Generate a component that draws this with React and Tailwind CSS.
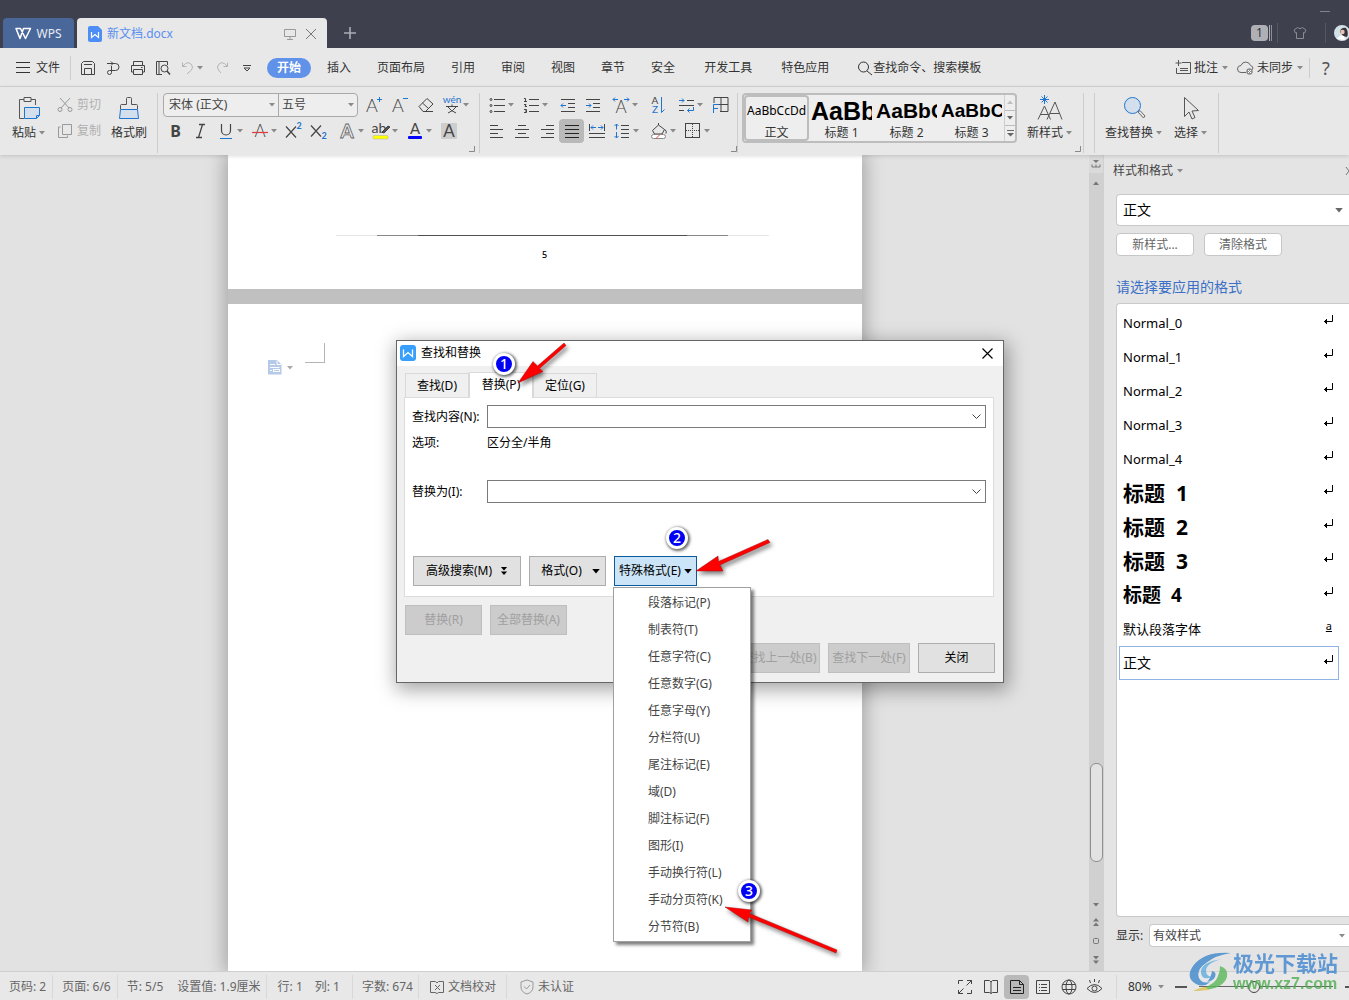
import { useState } from "react";

/* ---------------- DATA ---------------- */

const MENU_TABS = ["插入", "页面布局", "引用", "审阅", "视图", "章节", "安全"];
const EXTRA_TABS = ["开发工具", "特色应用"];

const SPECIAL_FORMATS = [
  "段落标记(P)",
  "制表符(T)",
  "任意字符(C)",
  "任意数字(G)",
  "任意字母(Y)",
  "分栏符(U)",
  "尾注标记(E)",
  "域(D)",
  "脚注标记(F)",
  "图形(I)",
  "手动换行符(L)",
  "手动分页符(K)",
  "分节符(B)",
];

const GALLERY = [
  { label: "正文", sample: "AaBbCcDd", preview: "text-xs" },
  { label: "标题 1", sample: "AaBb", preview: "font-['Liberation_Sans'] text-[25px] font-bold" },
  { label: "标题 2", sample: "AaBbC", preview: "font-['Liberation_Sans'] text-[21px] font-bold" },
  { label: "标题 3", sample: "AaBbCc", preview: "font-['Liberation_Sans'] text-[19px] font-bold" },
];

const STYLES = [
  { name: "Normal_0", cls: "text-[13px]" },
  { name: "Normal_1", cls: "text-[13px]" },
  { name: "Normal_2", cls: "text-[13px]" },
  { name: "Normal_3", cls: "text-[13px]" },
  { name: "Normal_4", cls: "text-[13px]" },
  { name: "标题  1", cls: "text-[21px] font-bold" },
  { name: "标题  2", cls: "text-[21px] font-bold" },
  { name: "标题  3", cls: "text-[21px] font-bold" },
  { name: "标题  4", cls: "text-[19px] font-bold" },
  { name: "默认段落字体", cls: "text-[13px]", mark: "a" },
  { name: "正文", cls: "text-sm" },
];

/* ---------------- SMALL PARTS ---------------- */

function Icon({ children, size = 18, box = 18, className = "" }) {
  return (
    <svg
      width={size}
      height={size}
      viewBox={`0 0 ${box} ${box}`}
      fill="none"
      stroke="currentColor"
      strokeWidth="1"
      className={`shrink-0 overflow-visible ${className}`}
      aria-hidden="true"
    >
      {children}
    </svg>
  );
}

function Caret({ className = "text-[#8a8a8a]", wide }) {
  return (
    <svg
      width={wide ? 8 : 6}
      height={wide ? 5 : 4}
      viewBox="0 0 6 4"
      className={`shrink-0 ${className}`}
      aria-hidden="true"
    >
      <path d="M0 0h6L3 3.6z" fill="currentColor" />
    </svg>
  );
}

function Tool({ label, children, caret, active }) {
  return (
    <button
      aria-label={label}
      className={`flex h-6 shrink-0 items-center justify-center gap-[2px] rounded ${
        caret ? "w-[34px]" : "w-[25px]"
      } ${active ? "bg-[#b9b9b9]" : ""}`}
    >
      {children}
      {caret && <Caret />}
    </button>
  );
}

function Letter({ children, size = 17, x = 9, y = 15, ...rest }) {
  return (
    <text
      x={x}
      y={y}
      fontSize={size}
      textAnchor="middle"
      fill="currentColor"
      stroke="none"
      fontFamily="Lato, sans-serif"
      {...rest}
    >
      {children}
    </text>
  );
}

function Divider({ className = "h-[62px]" }) {
  return <div className={`w-px shrink-0 bg-[#cdcdcd] ${className}`} />;
}

function Launcher() {
  return (
    <Icon size={6} box={6} className="mb-px self-end text-[#888]">
      <path d="M5.5 0v5.5H0" />
    </Icon>
  );
}

function DocLogo({ className }) {
  return (
    <Icon size={16} box={16} className={className}>
      <rect width="16" height="16" rx="3" fill="currentColor" stroke="none" />
      <path d="M3.5 4.5v7l4.5-4 4.5 4v-7" stroke="#fff" strokeWidth="1.3" />
    </Icon>
  );
}

function ReturnMark() {
  return (
    <Icon size={10} box={10} className="text-black">
      <path d="M9.5 0v6.5H1M3.5 4v5M2.5 5v3" />
    </Icon>
  );
}

/* ---------------- TITLE BAR ---------------- */

function TitleBar() {
  return (
    <header className="relative flex h-12 shrink-0 items-end bg-[#3e414d] pl-[3px] text-xs">
      <button className="flex h-[30px] w-[71px] items-center justify-center gap-1 rounded-t bg-[#4a6799] pt-px text-[#e8ecf4]">
        <Icon className="text-white" size={17} box={17}>
          <path d="M1 3.500h4.500L10.500 13.500 15.500 3.500H8.500L5 13.500z" strokeWidth="1.500" strokeLinejoin="round" />
        </Icon>
        WPS
      </button>
      <div className="ml-[3px] flex h-[30px] w-[250px] items-center rounded-t bg-[#e8e8e8] px-[10px] pt-px text-[#5a8ff0]">
        <Icon size={16} box={16} className="mr-1 text-[#4d8df6]">
          <path d="M3 0h8l4 4v10a2 2 0 0 1-2 2H3a2 2 0 0 1-2-2V2a2 2 0 0 1 2-2z" fill="currentColor" stroke="none" />
          <path d="M4.500 6v5.500L8 8.500l3.500 3V6" stroke="#fff" strokeWidth="1.200" />
        </Icon>
        <span className="flex-1">新文档.docx</span>
        <Icon size={12} box={12} className="mr-[9px] text-[#999]">
          <path d="M.5 1.500h11v7H.5zM6 8.500v3M3 11.500h6" />
        </Icon>
        <button aria-label="关闭文档">
          <Icon size={12} box={12} className="text-[#777]">
            <path d="M1 1l10 10M11 1L1 11" />
          </Icon>
        </button>
      </div>
      <button aria-label="新建" className="ml-4 flex h-[30px] items-center">
        <Icon size={14} box={14} className="text-[#aaadb5]">
          <path d="M7 1v12M1 7h12" strokeWidth="1.600" />
        </Icon>
      </button>

      <div className="ml-auto flex h-[30px] items-center text-[#6f727c]">
        <span className="flex h-4 w-[17px] items-center justify-center rounded-sm bg-[#aeb0b6] text-[#33363f]">1</span>
        <span className="ml-px h-4 w-px bg-[#aeb0b6]" />
        <span className="ml-px h-4 w-px bg-[#8d9098]" />
        <span className="ml-[5px] h-5 w-px bg-[#555863]" />
        <Icon size={14} box={14} className="ml-[15px] text-[#8a8c94]">
          <path d="M4.500 1.500Q7 4 9.500 1.500L13 4l-1.500 3-1-.5v6h-7v-6l-1 .5L1 4z" />
        </Icon>
        <span className="ml-[18px] h-5 w-px bg-[#555863]" />
        <Icon size={16} box={16} className="-mr-px ml-2">
          <circle cx="8" cy="8" r="8" fill="#d3e0e6" stroke="none" />
          <path d="M6 7q1-5 6-4 3 4 1 9l-4-1z" fill="#3b3338" stroke="none" />
          <circle cx="8.500" cy="7" r="2.200" fill="#e7c4b5" stroke="none" />
          <path d="M3 14q3-5 7-3l1 4z" fill="#fff" stroke="none" />
        </Icon>
      </div>
      <button aria-label="最小化" className="absolute right-[19px] top-[11px] h-px w-[10px] bg-[#82848c]" />
    </header>
  );
}

/* ---------------- MENU BAR ---------------- */

function MenuBar() {
  return (
    <nav className="flex h-[39px] shrink-0 items-center border-b border-[#d4d4d4] bg-[#e8e8e8] pl-[15px] pt-px text-xs text-[#333]">
      <button className="flex items-center gap-[5px]">
        <Icon size={16} box={16}>
          <path d="M1 2.500h14M1 7.500h14M1 12.500h14" />
        </Icon>
        文件
      </button>
      <Divider className="ml-[10px] h-6" />
      <div className="ml-1 flex items-center text-[#444]">
        <Tool label="保存">
          <Icon size={16} box={16}>
            <path d="M1.500 3.500l2-2h9l2 2v11h-13zM4.500 14V8.500h7V14M4 4.500h8" />
          </Icon>
        </Tool>
        <Tool label="输出为PDF">
          <Icon size={16} box={16}>
            <path d="M2 3.500h6M6 1.500l2 2-2 2M6 3.500h4.500a3.500 3.500 0 0 1 0 7H6M6.500 6v6.500M6.500 12.500a2 2 0 1 1-2-2h3" />
          </Icon>
        </Tool>
        <Tool label="打印">
          <Icon size={16} box={16}>
            <path d="M3.500 5V1.500h9V5M3.500 12h-2V5.500h13V12h-2M3.500 9.500h9v5h-9zM11 7.500h1.500" />
          </Icon>
        </Tool>
        <Tool label="打印预览">
          <Icon size={16} box={16}>
            <path d="M7 14.500H1.500v-13h11V5M4 1.500v13" />
            <circle cx="9.500" cy="8.500" r="3.500" />
            <path d="M12 11l3 3.500" strokeWidth="1.500" />
          </Icon>
        </Tool>
        <div className="flex text-[#b4b4b4]">
          <Tool label="撤销" caret>
            <Icon size={14} box={14}>
              <path d="M1.500 1.500v4h4M1.500 5.500l3-3a4.500 4.500 0 0 1 6 6.500L6 13" />
            </Icon>
          </Tool>
          <Tool label="重做">
            <Icon size={14} box={14}>
              <path d="M12.500 1.500v4h-4M12.500 5.500l-3-3a4.500 4.500 0 0 0-6 6.500L6 12" />
            </Icon>
          </Tool>
        </div>
        <Tool label="自定义快速访问工具栏">
          <Icon size={10} box={10}>
            <path d="M1 2.500h8M2 5l3 3 3-3z" />
          </Icon>
        </Tool>
      </div>
      <button className="ml-2 h-5 w-11 shrink-0 rounded-full bg-[#5f92e8] font-bold text-white">开始</button>
      <div className="ml-4 flex gap-[26px] whitespace-nowrap">
        {MENU_TABS.map((t) => (
          <button key={t}>{t}</button>
        ))}
      </div>
      <div className="ml-[29px] flex gap-[29px] whitespace-nowrap">
        {EXTRA_TABS.map((t) => (
          <button key={t}>{t}</button>
        ))}
      </div>
      <button className="ml-7 flex items-center whitespace-nowrap">
        <Icon size={16} box={16}>
          <circle cx="6.500" cy="7" r="5" />
          <path d="M10 11l5 4" />
        </Icon>
        查找命令、搜索模板
      </button>

      <div className="ml-auto flex items-center whitespace-nowrap">
        <button className="flex items-center gap-[3px]">
          <Icon size={16} box={16} className="text-[#555]">
            <path d="M7 2.500h8.500v11H1.500V8M3.500 0v6M.5 3h6M5 8.500h8M5 10.500h8" />
          </Icon>
          批注
          <Caret className="ml-px text-[#8a8a8a]" />
        </button>
        <button className="ml-[9px] flex items-center gap-[3px]">
          <Icon size={17} box={17} className="text-[#666]">
            <path d="M9 13.500H4a3.500 3.500 0 0 1 0-7 5 5 0 0 1 9.500 0 3 3 0 0 1 2 4" />
            <circle cx="12.500" cy="12.500" r="3.200" fill="#8b8b8b" stroke="none" />
            <path d="M11 11l3 3M14 11l-3 3" stroke="#fff" />
          </Icon>
          未同步
          <Caret className="ml-px text-[#8a8a8a]" />
        </button>
        <Divider className="ml-[6px] h-5" />
        <button aria-label="帮助" className="ml-[11px] mr-[18px] w-[10px] text-center text-lg leading-5 text-[#555]">
          ?
        </button>
      </div>
    </nav>
  );
}

/* ---------------- RIBBON ---------------- */

function BigTool({ label, caret, children }) {
  return (
    <button className="flex shrink-0 flex-col items-center gap-[2px] whitespace-nowrap text-xs text-[#333]">
      <span className="flex h-[30px] items-center">{children}</span>
      <span className="flex h-4 items-center gap-[3px] leading-4">
        {label}
        {caret && <Caret />}
      </span>
    </button>
  );
}

function FontGroup() {
  return (
    <div className="ml-[5px] flex shrink-0 flex-col gap-[2px] text-[#444]">
      <div className="flex items-center gap-px">
        <div className="mr-[2px] flex h-6 rounded border border-[#a9a9a9] bg-[#eee] text-xs">
          <label className="flex w-[115px] items-center border-r border-[#a9a9a9] pr-[3px]">
            <select aria-label="字体" className="h-full flex-1 appearance-none pl-[5px] outline-none">
              <option>宋体 (正文)</option>
            </select>
            <Caret />
          </label>
          <label className="flex w-[78px] items-center pr-[3px]">
            <select aria-label="字号" className="h-full w-10 flex-1 appearance-none pl-[3px] outline-none">
              <option>五号</option>
            </select>
            <Caret />
          </label>
        </div>
        <Tool label="增大字号">
          <Icon>
            <Letter x={7} y={16} size={18} fontWeight="300">A</Letter>
            <path d="M14.500 1v5M12 3.500h5" stroke="#1f74d0" />
          </Icon>
        </Tool>
        <Tool label="减小字号">
          <Icon>
            <Letter x={7} y={16} size={18} fontWeight="300">A</Letter>
            <path d="M12 2.500h5" stroke="#1f74d0" />
          </Icon>
        </Tool>
        <Tool label="清除格式">
          <Icon>
            <path d="M2 10.500L10 2.500l6 5.500-7.500 7.500H6zM5.500 7l6 5.500M6 15.500h10" />
          </Icon>
        </Tool>
        <Tool label="拼音指南" caret>
          <Icon>
            <Letter y={7} size={10} fill="#1f74d0">wén</Letter>
            <path d="M3 10.500h12M9 8.500v2M5 11q3 4 8 6M13 11q-3 4-8 6" />
          </Icon>
        </Tool>
      </div>
      <div className="flex items-center">
        <Tool label="加粗">
          <span className="text-base font-bold">B</span>
        </Tool>
        <Tool label="倾斜">
          <Icon>
            <path d="M7 2.500h6M4 15.500h6M10.500 2.500l-4 13" strokeWidth="1.300" />
          </Icon>
        </Tool>
        <Tool label="下划线" caret>
          <Icon>
            <path d="M4.500 2v6.500a4 4 0 0 0 9 0V2" strokeWidth="1.200" />
            <path d="M3 16.500h12" stroke="#1f74d0" />
          </Icon>
        </Tool>
        <Tool label="删除线" caret>
          <Icon>
            <Letter fontWeight="300">A</Letter>
            <path d="M1 10.500h16" stroke="#e03a3a" strokeWidth="1.200" />
          </Icon>
        </Tool>
        <Tool label="上标">
          <Icon>
            <path d="M1 4.500l10 11M11 4.500l-10 11" strokeWidth="1.200" />
            <Letter x={14} y={7} size={9} fontWeight="700" fill="#1f74d0">2</Letter>
          </Icon>
        </Tool>
        <Tool label="下标">
          <Icon>
            <path d="M1 3.500l10 11M11 3.500l-10 11" strokeWidth="1.200" />
            <Letter x={14} y={17} size={9} fontWeight="700" fill="#1f74d0">2</Letter>
          </Icon>
        </Tool>
        <div className="ml-[3px] flex">
          <Tool label="文字效果" caret>
            <Icon>
              <Letter y={16} size={19} fontWeight="700" fill="#e8e8e8" stroke="#666" strokeWidth=".8">A</Letter>
            </Icon>
          </Tool>
          <Tool label="突出显示" caret>
            <Icon>
              <Letter x={7} y={11} size={14}>ab</Letter>
              <path d="M10 10l6-6 2 1-6 6z" fill="#555" />
              <rect x="1" y="13.500" width="15" height="3.500" rx="1" fill="#ffff00" stroke="#aaa" strokeWidth=".5" />
            </Icon>
          </Tool>
          <Tool label="字体颜色" caret>
            <Icon>
              <Letter y={12} size={15}>A</Letter>
              <rect x="2" y="14" width="14" height="3" rx="1" fill="#0000ff" stroke="none" />
            </Icon>
          </Tool>
          <Tool label="字符底纹">
            <Icon>
              <rect x="1" y="1" width="16" height="16" rx="1" fill="#cdcdcd" stroke="none" />
              <Letter>A</Letter>
            </Icon>
          </Tool>
        </div>
      </div>
    </div>
  );
}

function ParagraphGroup() {
  const blue = "#1f74d0";
  return (
    <div className="ml-1 flex shrink-0 flex-col gap-[2px] text-[#444]">
      <div className="flex items-center">
        <Tool label="项目符号" caret>
          <Icon>
            <path d="M6 3.500h11M6 9.500h11M6 15.500h11" />
            <circle cx="3" cy="3.500" r="1" />
            <circle cx="3" cy="9.500" r="1" />
            <circle cx="3" cy="15.500" r="1" />
          </Icon>
        </Tool>
        <Tool label="编号" caret>
          <Icon>
            <path d="M7 3.500h10M7 9.500h10M7 15.500h10M2 2.500h1.500v3M2 5.500h3M2 8.500h2l-1 2h2M2 13.500h2.500v3H2M3 15h1" />
          </Icon>
        </Tool>
        <div className="ml-[3px] flex">
          <Tool label="减少缩进量">
            <Icon>
              <path d="M2 3.500h14M9 7.500h7M9 11.500h7M2 15.500h14" />
              <path d="M2 9.500h5M4 7.500l-2 2 2 2" stroke={blue} />
            </Icon>
          </Tool>
          <Tool label="增加缩进量">
            <Icon>
              <path d="M2 3.500h14M9 7.500h7M9 11.500h7M2 15.500h14" />
              <path d="M2 9.500h5M5 7.500l2 2-2 2" stroke={blue} />
            </Icon>
          </Tool>
        </div>
        <div className="ml-[3px] flex">
          <Tool label="字符缩放" caret>
            <Icon>
              <Letter y={17} fontWeight="300" size={17}>A</Letter>
              <path d="M1 3.500h5M3 1.500l-2 2 2 2M12 3.500h5M15 1.500l2 2-2 2" stroke={blue} />
            </Icon>
          </Tool>
        </div>
        <div className="ml-[3px] flex">
          <Tool label="排序">
            <Icon>
              <Letter x={6} y={8} size={10}>A</Letter>
              <Letter x={6} y={17} size={10} fill={blue}>Z</Letter>
              <path d="M12.500 1v15.500M12.500 16.500l3-3" stroke={blue} />
            </Icon>
          </Tool>
        </div>
        <div className="ml-[3px] flex">
          <Tool label="显示编辑标记" caret>
            <Icon>
              <path d="M10 4.500h7M2 9.500h15M2 14.500h5" />
              <path d="M2 4.500h5M5 2.500l2 2-2 2M16.500 11v3.500h-6M12.500 12.500l-2 2 2 2" stroke={blue} />
            </Icon>
          </Tool>
          <Tool label="制表位">
            <Icon>
              <path d="M3 7V1.500h14v14H9M10 1.500v14M8 8.500h9" />
              <path d="M2.500 17V8.500H8M2.500 12.500H7" stroke={blue} />
            </Icon>
          </Tool>
        </div>
      </div>
      <div className="flex items-center">
        <Tool label="左对齐">
          <Icon>
            <path d="M2 3.500h8M2 7.500h13M2 11.500h8M2 15.500h13" />
          </Icon>
        </Tool>
        <Tool label="居中对齐">
          <Icon>
            <path d="M5 3.500h8M2 7.500h14M5 11.500h8M2 15.500h14" />
          </Icon>
        </Tool>
        <Tool label="右对齐">
          <Icon>
            <path d="M8 3.500h8M3 7.500h13M8 11.500h8M3 15.500h13" />
          </Icon>
        </Tool>
        <Tool label="两端对齐" active>
          <Icon>
            <path d="M2 3.500h14M2 7.500h14M2 11.500h14M2 15.500h14" stroke="#222" />
          </Icon>
        </Tool>
        <Tool label="分散对齐">
          <Icon>
            <path d="M1.500 2v7M16.500 2v7M1 11.500h16M1 15.500h16" />
            <path d="M3 5.500h5M5 3.500l-2 2 2 2M10 5.500h5M13 3.500l2 2-2 2" stroke={blue} />
          </Icon>
        </Tool>
        <Tool label="行距" caret>
          <Icon>
            <path d="M8 3.500h8M8 7.500h8M8 11.500h8M8 15.500h8" />
            <path d="M3.500 2v5.500M1.500 4l2-2 2 2M3.500 10v6M1.500 14l2 2 2-2" stroke={blue} />
          </Icon>
        </Tool>
        <div className="ml-[3px] flex">
          <Tool label="底纹颜色" caret>
            <Icon>
              <path d="M2.500 8.500l6-5.500 6 4.500-2.500 4.500H4.500zM8.500 3V1M15 7.500q2 2 1 4" />
              <rect x="1.500" y="12.500" width="14" height="4" rx="2" fill="#fff" stroke="#888" />
              <path d="M6 16.500l4-4" stroke="#e04b4b" />
            </Icon>
          </Tool>
          <Tool label="边框" caret>
            <Icon>
              <rect x="1.500" y="1.500" width="14" height="14" />
              <path d="M8.500 2v14M2 8.500h14" strokeDasharray="1 1" />
            </Icon>
          </Tool>
        </div>
      </div>
    </div>
  );
}

function StyleGallery() {
  return (
    <div className="ml-1 flex h-[50px] shrink-0 rounded border-2 border-[#bdbdbd] bg-[#eee] text-xs text-[#333]">
      {GALLERY.map((s, i) => (
        <button
          key={s.label}
          className={`flex w-[65px] flex-col items-center justify-end overflow-hidden px-[2px] ${
            i === 0 ? "rounded-sm shadow-[inset_0_0_0_2px_#bdbdbd]" : ""
          }`}
        >
          <span className={`flex h-7 w-full items-center overflow-hidden leading-7 text-black ${i === 0 ? "justify-center" : ""} ${s.preview}`}>
            {s.sample}
          </span>
          <span className="leading-4">{s.label}</span>
        </button>
      ))}
      <div className="flex w-[11px] flex-col divide-y divide-[#bdbdbd] border-l border-[#cfcfcf]">
        <button aria-label="上一行" className="flex flex-1 items-center justify-center">
          <Caret className="rotate-180 text-[#c0c0c0]" />
        </button>
        <button aria-label="下一行" className="flex flex-1 items-center justify-center">
          <Caret className="text-[#666]" />
        </button>
        <button aria-label="更多样式" className="flex flex-1 items-center justify-center">
          <Icon size={7} box={7} className="text-[#666]">
            <path d="M0 .5h7" />
            <path d="M0 3h7L3.500 6.500z" fill="currentColor" stroke="none" />
          </Icon>
        </button>
      </div>
    </div>
  );
}

function Ribbon() {
  return (
    <section className="z-10 flex h-[68px] shrink-0 items-start bg-[#e8e8e8] pt-[6px] shadow-[0_1px_4px_rgba(0,0,0,0.15)]">
      <div className="flex shrink-0 pl-3">
        <BigTool label="粘贴" caret>
          <Icon size={24} box={24} className="text-[#555]">
            <path d="M7 3.500H2.500v19H7M14 3.500h4.500V9M7 1.500h7v4H7z" />
            <path d="M7.500 11.500h15v8l-3 3h-12z" fill="#d3dfec" stroke="#1f74d0" />
            <path d="M19.500 22.500v-3h3" stroke="#1f74d0" />
          </Icon>
        </BigTool>
        <div className="ml-3 flex flex-col gap-[2px] text-xs text-[#b0b0b0]">
          <button disabled className="flex h-6 items-center gap-1">
            <Icon size={16} box={16} className="text-[#999]">
              <path d="M3 1l9 10M13 1L4 11" />
              <circle cx="3" cy="12.500" r="2" />
              <circle cx="13" cy="12.500" r="2" />
            </Icon>
            剪切
          </button>
          <button disabled className="flex h-6 items-center gap-1">
            <Icon size={16} box={16} className="text-[#999]">
              <path d="M5.500 1.500h9v10h-9zM3.500 4H1.500v10.500h9v-2" />
            </Icon>
            复制
          </button>
        </div>
        <div className="ml-[10px]">
          <BigTool label="格式刷">
            <Icon size={24} box={24} className="text-[#555]">
              <path d="M3.500 13V9.500q0-1 1-1h5v-6q0-1 1-1h3q1 0 1 1v6h5q1 0 1 1V13" />
              <path d="M3.500 13.500h17l1 9h-19z" fill="#d3dfec" stroke="#1f74d0" />
            </Icon>
          </BigTool>
        </div>
      </div>
      <Divider className="ml-[10px] h-[60px]" />
      <FontGroup />
      <div className="-ml-1 flex h-[60px] w-[6px] shrink-0">
        <Launcher />
      </div>
      <Divider className="ml-1 h-[60px]" />
      <ParagraphGroup />
      <div className="-ml-px flex h-[60px] w-[6px] shrink-0">
        <Launcher />
      </div>
      <Divider className="h-[60px]" />
      <StyleGallery />
      <div className="ml-[10px]">
        <BigTool label="新样式" caret>
          <Icon size={26} box={26} className="text-[#555]">
            <path d="M1 24.500L7.500 11l6 13.500M3.500 19.500h8M10 24.500L18 7l7 17.500M13 18.500h9.500" />
            <path d="M7.500 0v9M3 4.500h9M4.500 1.500l6 6M10.500 1.500l-6 6" stroke="#1f74d0" />
          </Icon>
        </BigTool>
      </div>
      <div className="flex h-[60px] w-[11px] justify-center">
        <Launcher />
      </div>
      <Divider className="h-[60px]" />
      <Divider className="ml-[10px] h-[60px]" />
      <div className="ml-[10px] flex gap-3">
        <BigTool label="查找替换" caret>
          <Icon size={24} box={24} className="text-[#666]">
            <circle cx="10.500" cy="9.500" r="8" fill="#d3dfec" stroke="#1f74d0" />
            <path d="M16 16l2-1.500 5 5.500-1.500 2z" />
          </Icon>
        </BigTool>
        <BigTool label="选择" caret>
          <Icon size={24} box={24} className="text-[#555]">
            <path d="M5.500 1.500v19l4.500-4.500 3 7 3-1.500-3-6.500 6.500-.5z" />
          </Icon>
        </BigTool>
      </div>
      <Divider className="ml-[11px] h-[60px]" />
    </section>
  );
}

/* ---------------- FIND / REPLACE DIALOG ---------------- */

function DialogCombo({ id, label }) {
  const [value, setValue] = useState("");
  return (
    <div className="flex items-center">
      <label htmlFor={id} className="w-[75px] whitespace-nowrap">
        {label}
      </label>
      <div className="flex h-[23px] flex-1 items-center border border-[#7a7a7a] pr-1">
        <input
          id={id}
          value={value}
          onChange={(e) => setValue(e.target.value)}
          className="h-full min-w-0 flex-1 px-1 outline-none"
        />
        <Icon size={9} box={9} className="text-[#444]">
          <path d="M.5 2.500l4 4 4-4" />
        </Icon>
      </div>
    </div>
  );
}

function DialogButton({ children, disabled, className = "w-[77px]" }) {
  return (
    <button
      disabled={disabled}
      className={`flex h-[30px] shrink-0 items-center justify-center whitespace-nowrap border ${
        disabled ? "border-[#bfbfbf] bg-[#ccc] text-[#a0a0a0]" : "border-[#adadad] bg-[#e1e1e1]"
      } ${className}`}
    >
      {children}
    </button>
  );
}

function StepBadge({ n, className }) {
  return (
    <span
      className={`absolute z-20 flex size-[22px] items-center justify-center rounded-full border-[3px] border-white bg-[#0000f5] text-sm font-medium text-white shadow-[1px_1px_3px_1px_rgba(0,0,0,0.6)] ${className}`}
    >
      {n}
    </span>
  );
}

function FindReplaceDialog() {
  return (
    <div
      role="dialog"
      aria-label="查找和替换"
      className="absolute left-[396px] top-[185px] w-[608px] border border-[#666] bg-[#f0f0f0] text-xs text-black shadow-[2px_5px_18px_2px_rgba(0,0,0,0.35)]"
    >
      <div className="flex h-[25px] items-center gap-[5px] bg-white pb-px pl-[3px] pr-[10px]">
        <DocLogo className="text-[#38a0fc]" />
        <span className="flex-1">查找和替换</span>
        <button aria-label="关闭对话框">
          <Icon size={11} box={11}>
            <path d="M.5 .5l10 10M10.500 .5l-10 10" strokeWidth="1.200" />
          </Icon>
        </button>
      </div>

      <div className="px-[7px] pb-[9px] pt-[6px]">
        <div role="tablist" className="relative z-10 ml-px flex items-end">
          <button role="tab" className="h-6 w-16 border border-b-0 border-[#d9d9d9] pt-px">
            查找(D)
          </button>
          <button role="tab" className="-mb-px h-[26px] w-16 border-x border-t border-[#d9d9d9] bg-white pb-px">
            替换(P)
          </button>
          <button role="tab" className="h-6 w-16 border border-b-0 border-[#d9d9d9] pt-px">
            定位(G)
          </button>
        </div>

        <div className="mr-[2px] flex h-[200px] flex-col border border-[#dcdcdc] bg-white px-[7px] pt-[7px]">
          <DialogCombo id="find-what" label="查找内容(N):" />
          <div className="flex h-[30px] items-center">
            <span className="w-[75px]">选项:</span>
            <span>区分全/半角</span>
          </div>
          <div className="mt-[22px]">
            <DialogCombo id="replace-with" label="替换为(I):" />
          </div>
          <div className="mb-[10px] ml-px mt-auto flex gap-2">
            <DialogButton className="w-[108px] gap-2">
              高级搜索(M)
              <Icon size={8} box={9}>
                <path d="M1 0h7L4.500 4zM1 5h7L4.500 9z" fill="currentColor" stroke="none" />
              </Icon>
            </DialogButton>
            <DialogButton className="w-[77px] gap-[10px] pl-[6px]">
              格式(O)
              <Caret wide className="text-black" />
            </DialogButton>
            <div className="relative">
              <button
                aria-haspopup="menu"
                className="flex h-[30px] w-[83px] items-center justify-center gap-[3px] whitespace-nowrap border border-[#0a5a9e] bg-[#cce4f7]"
              >
                特殊格式(E)
                <Caret wide className="text-black" />
              </button>
              <ul
                role="menu"
                className="absolute left-[-1px] top-[31px] z-10 w-[138px] border border-[#a0a0a0] bg-white py-px text-[#444] shadow-[3px_3px_3px_rgba(0,0,0,0.5)]"
              >
                {SPECIAL_FORMATS.map((f) => (
                  <li key={f} role="none">
                    <button role="menuitem" className="h-[27px] w-full pl-[34px] text-left">
                      {f}
                    </button>
                  </li>
                ))}
              </ul>
            </div>
          </div>
        </div>

        <div className="mt-2 flex gap-2 px-px">
          <DialogButton disabled>替换(R)</DialogButton>
          <DialogButton disabled>全部替换(A)</DialogButton>
        </div>
        <div className="mt-2 flex justify-end gap-2 px-px">
          <DialogButton disabled className="w-[82px]">查找上一处(B)</DialogButton>
          <DialogButton disabled className="w-[82px]">查找下一处(F)</DialogButton>
          <DialogButton>关闭</DialogButton>
        </div>
      </div>

      {/* step markers */}
      <StepBadge n="1" className="left-24 top-3" />
      <StepBadge n="2" className="left-[269px] top-[186px]" />
      <StepBadge n="3" className="left-[341px] top-[539px]" />
      <svg
        viewBox="397 341 606 640"
        width="606"
        height="640"
        className="pointer-events-none absolute left-0 top-0 z-20 drop-shadow-[2px_3px_2px_rgba(0,0,0,0.5)]"
        fill="#fe0000"
        stroke="#a01010"
        strokeWidth=".5"
        aria-hidden="true"
      >
        <path d="M518 383L533 361.500 537.500 366 564 343 566 345.500 539.500 368.500 543 371.500z" />
        <path d="M696 571L718 556 718.500 561.500 768 539.500 770 542.500 720 565 723 571z" />
        <path d="M725 907L752 910 749.500 913.500 837 950 836 953 748.500 917 748 922z" />
      </svg>
    </div>
  );
}

/* ---------------- DOCUMENT ---------------- */

function DocumentArea() {
  return (
    <main className="relative min-w-0 flex-1 bg-[#e2e2e2]">
      <div className="h-full overflow-hidden">
        <div className="mx-auto flex h-full w-[634px] flex-col bg-[#c0c0c0] shadow-[0_0_18px_3px_rgba(0,0,0,0.28)]">
          <div className="h-[134px] bg-white pt-20">
            <div className="ml-[108px] mr-[93px] flex h-px">
              <div className="w-[41px] bg-[#e5e5e5]" />
              <div className="w-[41px] bg-[#888]" />
              <div className="flex-1 bg-[#505050]" />
              <div className="w-[41px] bg-[#888]" />
              <div className="w-[41px] bg-[#e5e5e5]" />
            </div>
            <p className="mt-3 text-center text-[9px] font-medium leading-[14px] text-black">5</p>
          </div>
          <div className="mt-[15px] flex flex-1 items-start bg-white pl-10 pt-[39px]">
            <Icon size={14} box={14} className="mt-[17px] text-[#b5c9e8]">
              <path d="M0 0h9l4.500 4.500V14.500H0z" fill="currentColor" stroke="none" />
              <path d="M2 4.500h5M2 7.500h9.500M2 10.500h2M9 .5v4h4" stroke="#fff" />
              <rect x="5.500" y="9.500" width="6" height="2" stroke="#fff" />
            </Icon>
            <Caret className="ml-[5px] mt-[23px] text-[#aaa]" />
            <div className="ml-3 size-5 border-b border-r border-[#b5b5b5]" />
          </div>
        </div>
      </div>
      <FindReplaceDialog />
    </main>
  );
}

function ScrollBar() {
  return (
    <div className="flex w-[15px] shrink-0 flex-col items-center bg-[#d0d0d0] pr-px text-[#777]">
      <div className="flex h-[18px] w-full items-center justify-center bg-[#dadada]">
        <Icon size={8} box={8}>
          <path d="M1 0h6L4 3z" fill="currentColor" stroke="none" />
          <path d="M0 7h8M0 7V4.500M4 7V4.500M8 7V4.500" />
        </Icon>
      </div>
      <Caret className="mt-2 rotate-180 text-[#777]" />
      <div className="mb-[41px] mt-auto h-[99px] w-[13px] rounded-md border border-[#8f8f8f] bg-[#e2e2e2]" />
      <div className="flex flex-col items-center gap-[11px] pb-[7px]">
        <Caret className="text-[#777]" />
        <Icon size={8} box={8}>
          <path d="M1 3.500h6L4 0zM1 8h6L4 4.500z" fill="currentColor" stroke="none" />
        </Icon>
        <Icon size={8} box={8}>
          <rect x="1.500" y="1.500" width="5" height="5" rx="1" />
        </Icon>
        <Icon size={8} box={8}>
          <path d="M1 0h6L4 3.500zM1 4.500h6L4 8z" fill="currentColor" stroke="none" />
        </Icon>
      </div>
    </div>
  );
}

/* ---------------- STYLE PANEL ---------------- */

function StylePanel() {
  const [selected, setSelected] = useState(10);

  return (
    <aside className="flex w-[245px] shrink-0 flex-col bg-[#e4e4e4] pl-3 text-xs text-[#444]">
      <div className="-ml-[3px] flex h-[31px] items-center gap-1">
        样式和格式
        <Caret />
        <button aria-label="关闭面板" className="-mr-1 ml-auto">
          <Icon size={8} box={8} className="text-[#777]">
            <path d="M1 0l6 8M7 0L1 8" />
          </Icon>
        </button>
      </div>
      <label className="mt-2 flex h-8 items-center rounded-l border border-r-0 border-[#c9c9c9] bg-white pr-[6px]">
        <select aria-label="当前样式" className="h-full flex-1 appearance-none pl-[6px] text-sm text-black outline-none">
          <option>正文</option>
        </select>
        <Caret wide className="text-[#666]" />
      </label>
      <div className="mt-[7px] flex gap-[10px]">
        <button className="h-[23px] w-[78px] rounded-sm border border-[#c6c6c6] bg-white text-[#666]">新样式...</button>
        <button className="h-[23px] w-[78px] rounded-sm border border-[#c6c6c6] bg-white text-[#666]">清除格式</button>
      </div>
      <h2 className="mt-5 text-sm leading-[22px] text-[#3b70c6]">请选择要应用的格式</h2>
      <ul className="mt-[5px] flex-1 rounded-l border border-r-0 border-[#c9c9c9] bg-white px-[2px] pt-[2px] text-black">
        {STYLES.map((s, i) => (
          <li key={s.name}>
            <button
              onClick={() => setSelected(i)}
              className={`flex h-[34px] w-[220px] items-center whitespace-pre border pl-[3px] pr-[5px] text-left ${
                i === selected ? "border-[#8fb4e3]" : "border-transparent"
              }`}
            >
              <span className={`flex-1 leading-8 ${s.cls}`}>{s.name}</span>
              <span className="pb-[6px]">
                {s.mark ? <span className="pr-px text-[11px] underline">{s.mark}</span> : <ReturnMark />}
              </span>
            </button>
          </li>
        ))}
      </ul>
      <div className="mb-6 mt-[7px] flex items-center">
        <label htmlFor="style-filter" className="w-[33px] text-[#333]">
          显示:
        </label>
        <div className="flex h-[23px] flex-1 items-center rounded-l border border-r-0 border-[#c9c9c9] bg-white pr-1">
          <select id="style-filter" className="h-full flex-1 appearance-none pl-[3px] outline-none">
            <option>有效样式</option>
          </select>
          <Caret />
        </div>
      </div>
    </aside>
  );
}

/* ---------------- STATUS BAR ---------------- */

function StatusBar() {
  const [zoom, setZoom] = useState(80);

  return (
    <footer className="flex h-[29px] shrink-0 items-center whitespace-nowrap border-t border-[#cfcfcf] bg-[#e8e8e8] pl-[9px] pt-px text-xs text-[#666]">
      <span>页码: 2</span>
      <Divider className="mx-[6px] h-6 opacity-60" />
      <span className="ml-[3px]">页面: 6/6</span>
      <Divider className="mx-[6px] h-6 opacity-60" />
      <span className="ml-[3px]">节: 5/5</span>
      <span className="ml-[14px]">设置值: 1.9厘米</span>
      <Divider className="mx-[5px] h-6 opacity-60" />
      <span className="ml-[6px]">行: 1</span>
      <span className="ml-3">列: 1</span>
      <Divider className="ml-3 h-6 opacity-60" />
      <span className="ml-[9px]">字数: 674</span>
      <Divider className="ml-[5px] h-6 opacity-60" />
      <button className="ml-[10px] flex items-center gap-[3px]">
        <Icon size={16} box={16}>
          <path d="M6 13.500H1.500v-11h5L8 4l1.500-1.500h5v11H9.500L8 14.500l-2-1M6 6l5 5M11 6l-5 5" />
        </Icon>
        文档校对
      </button>
      <Divider className="ml-[10px] h-6 opacity-60" />
      <button className="ml-3 flex items-center gap-[3px]">
        <Icon size={16} box={16} className="text-[#999]">
          <path d="M8 1l6 2v5q0 5-6 7-6-2-6-7V3zM5 7.500l2.500 2.500L11 6" />
        </Icon>
        未认证
      </button>

      <div className="ml-auto flex items-center text-[#444]">
        <div className="flex gap-px">
          <Tool label="全屏显示">
            <Icon size={16} box={16}>
              <path d="M1.500 5V1.500H6M10 1.500h4.500V5M14.500 11v3.500H10M6 14.500H1.500V11M9.500 6.500l5-5M1.500 14.500l5-5" />
            </Icon>
          </Tool>
          <Tool label="阅读版式">
            <Icon size={16} box={16}>
              <path d="M8 14.500l-1.500-1h-5v-12h5L8 3l1.500-1.500h5v12h-5zM8 3v11.500" />
            </Icon>
          </Tool>
          <Tool label="页面视图" active>
            <Icon size={16} box={16} className="text-[#222]">
              <path d="M1.500 1.500h9l4 4v9h-13zM10.500 1.500v4h4M4 8.500h8M4 11.500h8" />
            </Icon>
          </Tool>
          <Tool label="大纲视图">
            <Icon size={16} box={16}>
              <path d="M1.500 1.500h13v13h-13zM6 5.500h6M6 8.500h6M6 11.500h6M4 5.500h1M4 8.500h1M4 11.500h1" />
            </Icon>
          </Tool>
          <Tool label="Web版式">
            <Icon size={16} box={16}>
              <circle cx="8" cy="8" r="7" />
              <ellipse cx="8" cy="8" rx="3" ry="7" />
              <path d="M1.500 5.500h13M1.500 10.500h13" />
            </Icon>
          </Tool>
          <Tool label="护眼模式">
            <Icon size={17} box={17}>
              <path d="M1 10.500q7.500-8 15 0-7.500 8-15 0zM8.500 1v3M3.500 2l1 3M13.500 2l-1 3" />
              <circle cx="8.500" cy="10.500" r="2.500" />
            </Icon>
          </Tool>
        </div>
        <Divider className="ml-[9px] h-6 opacity-60" />
        <span className="ml-[11px] w-[26px] text-[#333]">{zoom}%</span>
        <Caret className="ml-1 text-[#8a8a8a]" />
        <button aria-label="缩小" className="ml-[11px] h-[2px] w-3 bg-[#555]" />
        <input
          type="range"
          aria-label="缩放比例"
          min="50"
          max="125"
          value={zoom}
          onChange={(e) => setZoom(Number(e.target.value))}
          className="ml-3 h-px w-[134px] appearance-none bg-[#666] [&::-webkit-slider-thumb]:size-3 [&::-webkit-slider-thumb]:appearance-none [&::-webkit-slider-thumb]:rounded-full [&::-webkit-slider-thumb]:border [&::-webkit-slider-thumb]:border-[#444] [&::-webkit-slider-thumb]:bg-[#e8e8e8]"
        />
        <button aria-label="放大" className="ml-3 h-[2px] w-1 bg-[#555]" />
      </div>
    </footer>
  );
}

/* ---------------- WATERMARK ---------------- */

function Watermark() {
  return (
    <div className="pointer-events-none absolute bottom-2 right-[11px] z-30 flex items-end font-bold opacity-80">
      <svg width="46" height="40" viewBox="0 0 46 40" className="-mr-px" aria-hidden="true">
        <path d="M43 1Q16-1 5 14q-8 12 3 18 8 4 14-2-8 2-11-4-3-8 7-15Q28 3 43 1z" fill="#3d87cb" />
        <path d="M34 7Q12 10 13 21q1 8 11 4-6-1-6-6 0-8 16-12z" fill="#62aee0" />
        <path d="M32 14q9 3 7 11-4 12-24 13l-10 1q18-4 23-11 4-7 4-14z" fill="#5cb85a" />
        <path d="M24 19q5 1 3 6-2 4-8 5 4-4 5-11z" fill="#3d87cb" />
        <path d="M5 39q8-4 12-4l5 3z" fill="#e0c04a" />
      </svg>
      <div className="flex flex-col">
        <span className="text-[21px] leading-[26px] text-[#3f86d0]">极光下载站</span>
        <span className="font-['Liberation_Sans'] text-base leading-4 text-[#4fae50]">www.xz7.com</span>
      </div>
    </div>
  );
}

/* ---------------- MAIN ---------------- */

function App() {
  return (
    <div className="relative flex h-screen flex-col overflow-hidden font-['Noto_Sans','Noto_Sans_CJK_SC',sans-serif]">
      <TitleBar />
      <MenuBar />
      <Ribbon />
      <div className="flex min-h-0 flex-1">
        <DocumentArea />
        <ScrollBar />
        <StylePanel />
      </div>
      <StatusBar />
      <Watermark />
    </div>
  );
}

export default App;
